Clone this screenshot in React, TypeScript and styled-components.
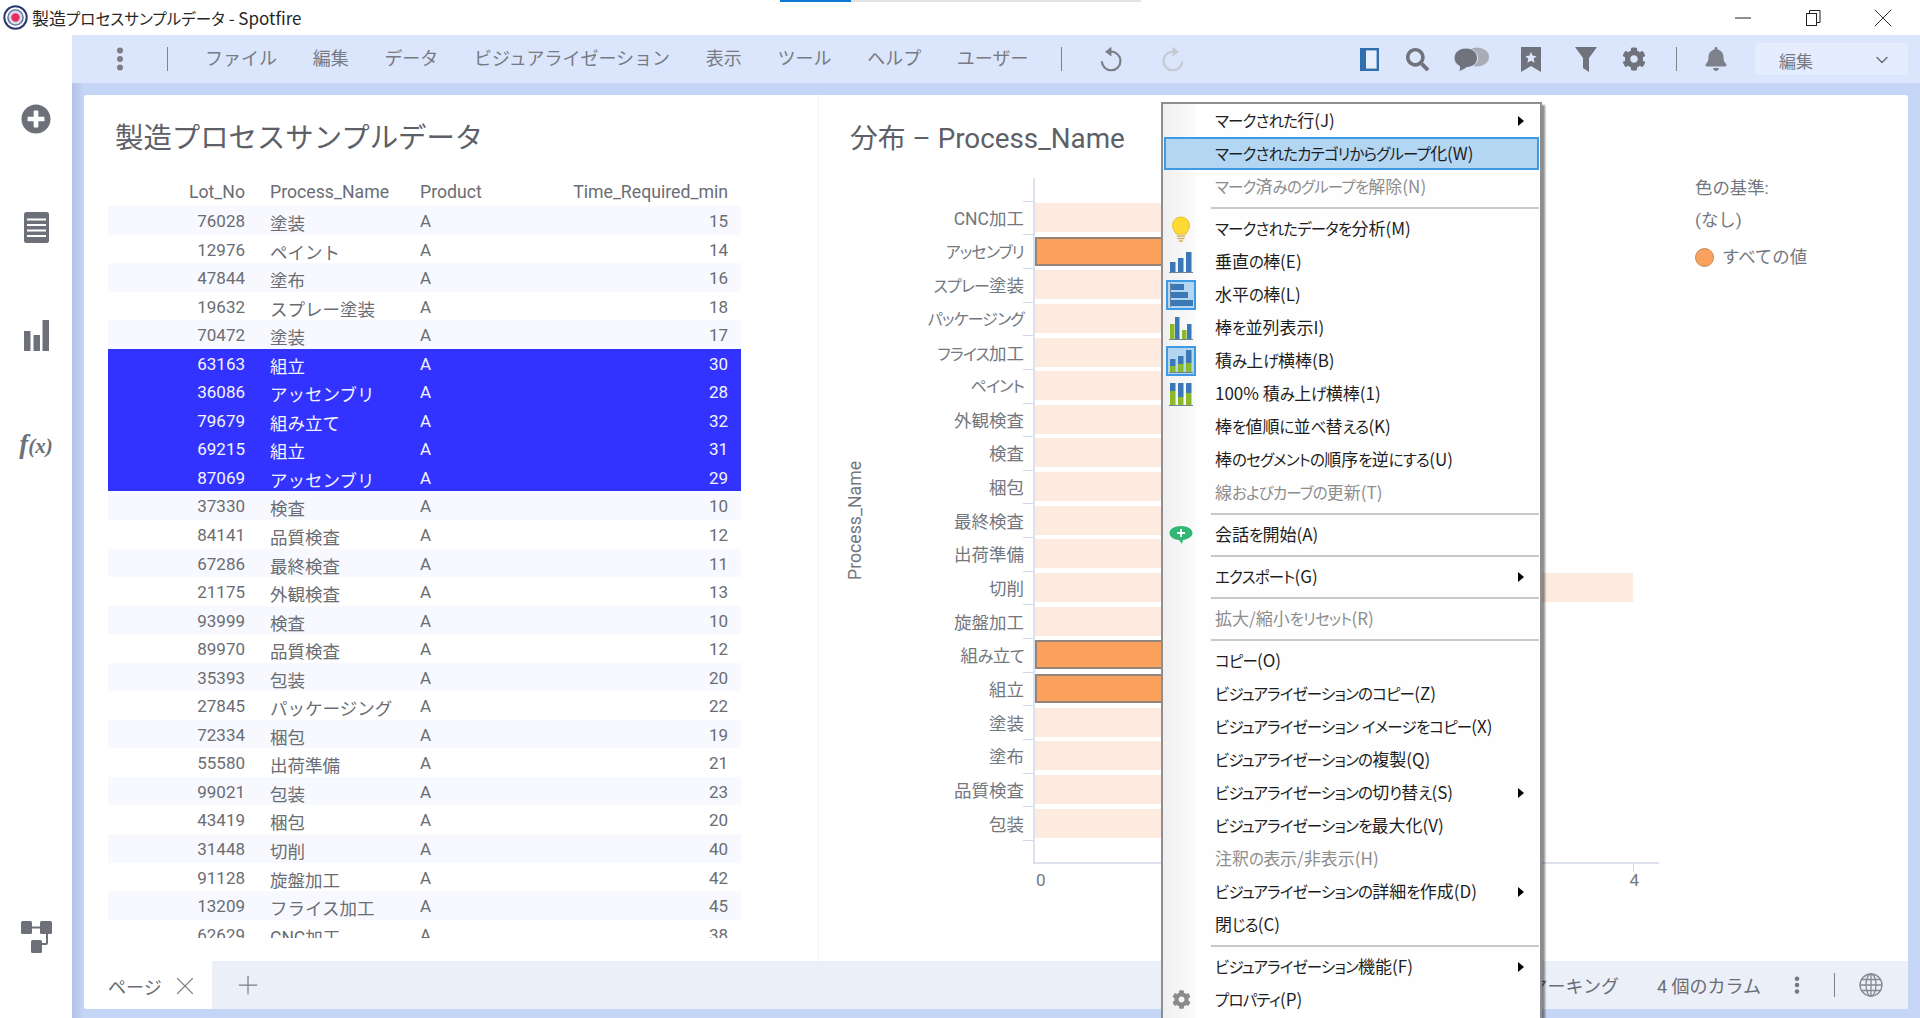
import React from "react";
import styled, { createGlobalStyle } from "styled-components";
import { FaCog, FaBell, FaSearch, FaPlusCircle } from "react-icons/fa";
import { ChevronDown, X, Plus } from "lucide-react";

const FONT = `Roboto, "Noto Sans CJK JP", sans-serif`;
const UI_FONT = `"Noto Sans CJK JP", "Noto Sans", sans-serif`;

const Global = createGlobalStyle`
  html, body { margin: 0; height: 100%; overflow: hidden; background: #fff; }
  #root { height: 100%; }
  * { box-sizing: border-box; }
`;

const Shell = styled.div`
  position: relative;
  width: 1920px;
  height: 1018px;
  overflow: hidden;
  display: flex;
  flex-direction: column;
  font-family: ${FONT};
  color: #6a6d74;
`;

/* narrower kana, as the Windows UI font of the menus has */
const Kana = styled.span`
  font-size: 0.91em;
  letter-spacing: -0.8px;
`;
const TitleKana = styled(Kana)`
  letter-spacing: 0.1px;
`;
const KANA_RUN = /([\u3040-\u30ff]+)/;
const withKana = (text: string, Run: typeof Kana = Kana) =>
  text.split(KANA_RUN).map((part, i) => (i % 2 ? <Run key={i}>{part}</Run> : part));

/* ---------- window title bar ---------- */
const TitleBar = styled.header`
  position: relative;
  height: 35px;
  flex: none;
  display: flex;
  align-items: center;
  padding-left: 3px;
  background: #fff;
`;
const LoadStrip = styled.div`
  position: absolute;
  left: 780px;
  top: 0;
  width: 361px;
  height: 2px;
  background: linear-gradient(to right, #0a78d4 0 71px, #e3e3e3 71px);
`;
const WindowTitle = styled.span`
  margin-left: 4px;
  font: 400 17px ${UI_FONT};
  font-feature-settings: "palt";
  color: #262626;
  white-space: nowrap;
`;
const WindowControls = styled.div`
  margin-left: auto;
  display: flex;
  align-items: center;
  padding-right: 2px;
`;
const WindowButton = styled.div`
  width: 70px;
  height: 35px;
  display: flex;
  align-items: center;
  justify-content: center;
  color: #222;
`;

const Body = styled.div`
  flex: 1;
  min-height: 0;
  display: flex;
`;

/* ---------- left rail ---------- */
const Rail = styled.nav`
  width: 72px;
  flex: none;
  display: flex;
  flex-direction: column;
  padding: 30px 0 27px;
  background: #fff;
  color: #6e7079;
`;
const RailSlot = styled.div`
  height: 108px;
  display: flex;
  align-items: center;
  justify-content: center;
`;
const RailFoot = styled(RailSlot)`
  margin-top: auto;
`;
const FxLabel = styled.span`
  font: italic 700 27px "Liberation Serif", serif;
  color: #6e7079;
  padding-top: 2px;
  small { font-size: 21px; }
`;

/* ---------- main column ---------- */
const Main = styled.main`
  flex: 1;
  min-width: 0;
  display: flex;
  flex-direction: column;
  background: linear-gradient(to right, #b3c3e6 0, #c5d5f6 12px);
`;
const Toolbar = styled.div`
  height: 48px;
  flex: none;
  display: flex;
  align-items: center;
  background: #dbe6fc;
  color: #7a7d85;
`;
const DotsSlot = styled.div`
  width: 95px;
  display: flex;
  justify-content: center;
`;
const VSep = styled.div<{ $ml?: number }>`
  width: 1px;
  height: 24px;
  background: #7f828a;
  margin-left: ${(p) => p.$ml ?? 0}px;
  flex: none;
`;
const MenuBar = styled.div`
  display: flex;
  gap: 35.7px;
  margin-left: 37px;
  padding-bottom: 4px;
  font: 400 18px ${UI_FONT};
  white-space: nowrap;
  color: #777a82;
`;
const IconSlot = styled.div<{ $w: number; $color?: string }>`
  width: ${(p) => p.$w}px;
  flex: none;
  display: flex;
  align-items: center;
  justify-content: center;
  color: ${(p) => p.$color ?? "#767983"};
`;
const ToolRight = styled.div`
  margin-left: auto;
  display: flex;
  align-items: center;
  padding-right: 12px;
`;
const ModeSelect = styled.div`
  width: 153px;
  height: 32px;
  display: flex;
  align-items: center;
  justify-content: space-between;
  padding: 2px 16px 0 24px;
  border-radius: 3px;
  background: #e4ecfd;
  font: 400 17px ${UI_FONT};
  color: #777a82;
`;

const Card = styled.section`
  flex: 1;
  min-height: 0;
  margin: 12px 12px 9px 12px;
  display: flex;
  flex-direction: column;
  background: #fff;
  border-radius: 3px;
  overflow: hidden;
`;
const Panels = styled.div`
  flex: 1;
  min-height: 0;
  display: flex;
`;

/* ---------- table panel ---------- */
const TablePanel = styled.div`
  width: 735px;
  flex: none;
  padding: 23px 0 0 24px;
  border-right: 1px solid #f0f2f9;
`;
const PanelTitle = styled.h2<{ $indent: number; $size: number }>`
  margin: 0 0 18px ${(p) => p.$indent}px;
  font: 400 ${(p) => p.$size}px/42px ${FONT};
  color: #5d6067;
  white-space: nowrap;
`;
const TableClip = styled.div`
  width: 633px;
  height: 760px;
  overflow: hidden;
`;
const Row = styled.div<{ $zebra?: boolean; $marked?: boolean; $head?: boolean }>`
  height: ${(p) => (p.$head ? 28 : 28.55)}px;
  display: grid;
  grid-template-columns: 137px 175px 1fr 200px;
  align-items: center;
  padding-right: 13px;
  font-size: ${(p) => (p.$head ? 17.7 : 17)}px;
  line-height: 28px;
  white-space: nowrap;
  background: ${(p) => (p.$marked ? "#3333ff" : p.$zebra ? "#f8f9fe" : "transparent")};
  color: ${(p) => (p.$marked ? "#f4f4ff" : "#6a6d74")};
`;
const NumCell = styled.span<{ $nudge?: boolean }>`
  text-align: right;
  padding-bottom: ${(p) => (p.$nudge ? 2 : 0)}px;
`;
const TextCell = styled.span<{ $first?: boolean; $nudge?: boolean }>`
  padding-left: ${(p) => (p.$first ? 25 : 0)}px;
  padding-bottom: ${(p) => (p.$nudge ? 2 : 0)}px;
`;
const CjkCell = styled(TextCell)`
  font-size: 17.5px;
  padding-top: 4px;
`;

/* ---------- chart panel ---------- */
const ChartPanel = styled.div`
  flex: 1;
  min-width: 0;
  padding: 23px 0 0 26px;
`;
const ChartBody = styled.div`
  display: flex;
  align-items: flex-start;
`;
const YTitle = styled.div`
  width: 19px;
  height: 684px;
  display: flex;
  align-items: center;
  justify-content: center;
  writing-mode: vertical-rl;
  transform: rotate(180deg);
  font-size: 17.7px;
  color: #74777e;
`;
const Plot = styled.div`
  width: 795px;
  flex: none;
`;
const AxisCap = styled.div<{ $h: number }>`
  height: ${(p) => p.$h}px;
  margin-left: 169px;
  border-left: 2px solid #dde0ee;
`;
const Band = styled.div`
  position: relative;
  height: 33.65px;
  display: flex;
  align-items: center;
  &::before {
    content: "";
    position: absolute;
    left: 159px;
    top: 0;
    width: 10px;
    height: 1px;
    background: #d5d8e8;
  }
`;
const EndTick = styled(Band)`
  height: 0;
`;
const BandLabel = styled.div`
  width: 169px;
  flex: none;
  padding-right: 9px;
  text-align: right;
  font-size: 17.5px;
  font-feature-settings: "palt";
  color: #74777e;
  white-space: nowrap;
`;
const BarTrack = styled.div`
  align-self: stretch;
  flex: 1;
  display: flex;
  align-items: center;
  border-left: 2px solid #dde0ee;
`;
const Bar = styled.div<{ $value: number; $marked?: boolean }>`
  width: ${(p) => p.$value * 149.5}px;
  height: 29px;
  background: ${(p) => (p.$marked ? "#fba15e" : "#fdebdf")};
  border: ${(p) => (p.$marked ? "2px solid #94857b" : "none")};
`;
const XAxis = styled.div`
  position: relative;
  margin-left: 169px;
  width: 626px;
  height: 30px;
  border-top: 2px solid #dde0ee;
  display: flex;
  justify-content: space-between;
  padding: 6px 20px 0 3px;
  font-size: 17px;
  line-height: 20px;
  color: #74777e;
  &::after {
    content: "";
    position: absolute;
    left: 600px;
    top: 0;
    width: 1px;
    height: 8px;
    background: #d5d8e8;
  }
`;
const Legend = styled.aside`
  margin-left: 36px;
  font-size: 17.4px;
  color: #74777e;
`;
const LegendLine = styled.div<{ $mb: number }>`
  line-height: 20px;
  margin-bottom: ${(p) => p.$mb}px;
  white-space: nowrap;
`;
const LegendItem = styled.div`
  display: flex;
  align-items: center;
  gap: 8px;
  line-height: 20px;
  margin-top: 1px;
`;
const LegendDot = styled.span`
  width: 19px;
  height: 19px;
  border-radius: 50%;
  background: #fba15e;
  border: 1px solid #c98a58;
`;

/* ---------- bottom tab bar ---------- */
const TabBar = styled.footer`
  height: 48px;
  flex: none;
  display: flex;
  align-items: center;
  background: #ebeff8;
  font-size: 18px;
  color: #6a6d74;
`;
const Tab = styled.div`
  width: 128px;
  height: 100%;
  display: flex;
  align-items: center;
  justify-content: space-between;
  padding: 1px 12px 0 24px;
  background: #fff;
  border-radius: 0 0 0 3px;
`;
const AddTab = styled.div`
  margin-left: 21px;
  display: flex;
  color: #7c7f86;
`;
const StatusRight = styled.div`
  margin-left: auto;
  display: flex;
  align-items: center;
  padding-right: 25px;
  white-space: nowrap;
`;
const StatusText = styled.span<{ $ml?: number }>`
  margin-left: ${(p) => p.$ml ?? 0}px;
`;
const StatusDots = styled.div`
  margin: 0 33px 0 32px;
  display: flex;
  color: #74777e;
`;
const StatusGlobe = styled.div`
  margin-left: 24px;
  display: flex;
  color: #85888f;
`;

/* ---------- context menu ---------- */
const ContextMenu = styled.div`
  position: absolute;
  left: 1161px;
  top: 102px;
  width: 381px;
  height: 930px;
  border: 2px solid #8e8e8e;
  background: linear-gradient(to right, #f0f0f0 0, #fafafa 30px, #fff 35px, #fefefe 36px);
  box-shadow: 3px 3px 2px rgba(0, 0, 0, 0.45);
  font: 400 17px ${UI_FONT};
  font-feature-settings: "palt";
  color: #1e1e1e;
`;
const MenuItem = styled.div<{ $active?: boolean; $disabled?: boolean }>`
  height: 33px;
  margin: 0 1px;
  display: flex;
  align-items: center;
  padding-right: 13px;
  border: 2px solid ${(p) => (p.$active ? "#3f9ae4" : "transparent")};
  background: ${(p) => (p.$active ? "#b3d6f3" : "transparent")};
  color: ${(p) => (p.$disabled ? "#8d8d8d" : "#1e1e1e")};
  white-space: nowrap;
`;
const MenuIcon = styled.span<{ $on?: boolean }>`
  width: 30px;
  height: 30px;
  flex: none;
  display: flex;
  align-items: center;
  justify-content: center;
  background: ${(p) => (p.$on ? "#b3d6f3" : "transparent")};
  outline: ${(p) => (p.$on ? "2px solid #3f9ae4" : "none")};
  outline-offset: -2px;
`;
const MenuLabel = styled.span`
  margin-left: 19px;
  padding-bottom: 2px;
`;
const SubArrow = styled.span`
  margin-left: auto;
  width: 0;
  height: 0;
  border-left: 6px solid #000;
  border-top: 5px solid transparent;
  border-bottom: 5px solid transparent;
`;
const MenuSep = styled.div`
  height: 2px;
  margin: 3.5px 1px 3.5px 48px;
  background: #c9c9c9;
`;

/* ---------- drawings ---------- */
const Logo = () => (
  <svg width="25" height="25" viewBox="0 0 25 25">
    <circle cx="12.5" cy="12.5" r="11.2" fill="#fff" stroke="#2b3a6b" strokeWidth="2" />
    <circle cx="12.5" cy="12.5" r="7.6" fill="#d6dcec" stroke="#5c6a96" strokeWidth="1.4" />
    <circle cx="12.5" cy="12.5" r="4.2" fill="#e5305f" />
  </svg>
);
const Dots = ({ size = 24 }: { size?: number }) => (
  <svg width="8" height={size} viewBox="0 0 8 24" fill="currentColor">
    <circle cx="4" cy="3.5" r="3" />
    <circle cx="4" cy="12" r="3" />
    <circle cx="4" cy="20.5" r="3" />
  </svg>
);
const TableIcon = () => (
  <svg width="25" height="31" viewBox="0 0 25 31">
    <rect width="25" height="31" rx="2.5" fill="#6e7079" />
    <path d="M3 7.5h19M3 13h19M3 18.5h19M3 24h19" stroke="#fff" strokeWidth="2.2" />
  </svg>
);
const BarsIcon = () => (
  <svg width="25" height="31" viewBox="0 0 25 31" fill="#6e7079">
    <rect x="0" y="11" width="6.5" height="20" />
    <rect x="9.5" y="15" width="6.5" height="16" />
    <rect x="18.5" y="0" width="6.5" height="31" />
  </svg>
);
const NetworkIcon = () => (
  <svg width="31" height="32" viewBox="0 0 31 32" fill="#6e7079">
    <rect x="0" y="0" width="11" height="13" rx="1.5" />
    <rect x="19" y="0" width="12" height="13" rx="1.5" />
    <rect x="10" y="19" width="11" height="13" rx="1.5" />
    <path d="M10 5.5h10v2H10zM25 12h2v10a2 2 0 0 1-2 2h-5v-2h5z" />
  </svg>
);
const PanelIcon = () => (
  <svg width="19" height="23" viewBox="0 0 19 23">
    <rect x="1.2" y="1.2" width="16.6" height="20.6" fill="#e7eefd" stroke="#2f6fb0" strokeWidth="2.4" />
    <rect x="1" y="1" width="5" height="21" fill="#2f6fb0" />
  </svg>
);
const UndoIcon = () => (
  <svg width="26" height="26" viewBox="0 0 24 24" fill="none">
    <path d="M11 5.2a8.600 8.600 0 1 1-8.400 8.800" stroke="currentColor" strokeWidth="2" />
    <path d="M5.500 5.200 11.500 .8v8.800z" fill="currentColor" />
  </svg>
);
const RedoIcon = () => (
  <svg width="26" height="26" viewBox="0 0 24 24" fill="none">
    <path d="M13 5.200a8.600 8.600 0 1 0 8.400 8.800" stroke="currentColor" strokeWidth="2" />
    <path d="M18.500 5.200 12.500 .8v8.800z" fill="currentColor" />
  </svg>
);
const CommentsIcon = () => (
  <svg width="36" height="25" viewBox="0 0 36 25">
    <ellipse cx="24" cy="10" rx="12" ry="9.5" fill="#a9acb5" />
    <path d="M13 1C6 1 1 5.500 1 11c0 3.500 2 6.500 5.500 8.200C7 21 6.500 23 5 24.500c3.500-.5 6.500-2 8.500-4 6 0 11-4 11-9.500S20 1 13 1z" fill="#70737c" stroke="#dbe6fc" strokeWidth="1" />
  </svg>
);
const BookmarkIcon = () => (
  <svg width="20" height="25" viewBox="0 0 20 25">
    <path d="M0 0h20v25l-10-6-10 6z" fill="#70737c" />
    <path d="M10 5l1.700 3.700 4 .4-3 2.700.9 4-3.600-2.100-3.600 2.100.9-4-3-2.700 4-.4z" fill="#dbe6fc" />
  </svg>
);
const FunnelIcon = () => (
  <svg width="22" height="25" viewBox="0 0 22 25" fill="#70737c">
    <path d="M0 0h22l-8 11v14l-6-4V11z" />
  </svg>
);
const Globe = () => (
  <svg width="24" height="24" viewBox="0 0 24 24" fill="none" stroke="currentColor" strokeWidth="1.3">
    <circle cx="12" cy="12" r="11" />
    <ellipse cx="12" cy="12" rx="5" ry="11" />
    <path d="M12 1v22M1 12h22M2.500 6.500h19M2.500 17.500h19" />
  </svg>
);
const RestoreIcon = () => (
  <svg width="15" height="16" viewBox="0 0 15 16" fill="none" stroke="#222" strokeWidth="1">
    <rect x="0.5" y="3.500" width="10" height="12" />
    <path d="M3.500 3.500V.5h10.500v12H10.500" />
  </svg>
);
const BLUE = "#3b78b5";
const GREEN = "#8cb82b";
const GREY = "#6f8296";
const Bulb = () => (
  <svg width="20" height="26" viewBox="0 0 20 26">
    <path d="M10 1a8.500 8.500 0 0 0-8.500 8.500c0 3.500 2.500 5.500 3.500 8.500h10c1-3 3.500-5 3.500-8.500A8.500 8.500 0 0 0 10 1z" fill="#ffd934" stroke="#e8bd2f" />
    <path d="M6 20h8M6.500 22.500h7M8 25h4" stroke="#d2b25c" strokeWidth="1.500" />
  </svg>
);
const VBars = () => (
  <svg width="24" height="22" viewBox="0 0 24 22">
    <rect x="1" y="11" width="5.500" height="10" fill={BLUE} />
    <rect x="9" y="7" width="5.500" height="14" fill={BLUE} />
    <rect x="17" y="1" width="5.500" height="20" fill={BLUE} />
    <path d="M0 21.500h24" stroke={GREY} />
  </svg>
);
const HBars = () => (
  <svg width="24" height="24" viewBox="0 0 24 24">
    <path d="M1.500 0v24" stroke={GREY} />
    <rect x="2" y="1" width="13" height="6" fill={BLUE} />
    <rect x="2" y="9" width="17" height="6" fill={BLUE} />
    <rect x="2" y="17" width="22" height="6" fill={BLUE} />
  </svg>
);
const SideBars = () => (
  <svg width="24" height="24" viewBox="0 0 24 24">
    <rect x="1" y="8" width="4.500" height="15" fill={GREEN} />
    <rect x="6" y="1" width="4.500" height="22" fill={BLUE} />
    <rect x="13" y="14" width="4.500" height="9" fill={GREEN} />
    <rect x="18" y="8" width="4.500" height="15" fill={BLUE} />
    <path d="M0 23.500h24" stroke={GREY} />
  </svg>
);
const StackBars = () => (
  <svg width="24" height="24" viewBox="0 0 24 24">
    <rect x="1" y="10" width="5.500" height="7" fill={BLUE} />
    <rect x="1" y="17" width="5.500" height="6" fill={GREEN} />
    <rect x="9" y="7" width="5.500" height="8" fill={BLUE} />
    <rect x="9" y="15" width="5.500" height="8" fill={GREEN} />
    <rect x="17" y="1" width="5.500" height="13" fill={BLUE} />
    <rect x="17" y="14" width="5.500" height="9" fill={GREEN} />
    <path d="M0 23.500h24" stroke={GREY} />
  </svg>
);
const FullBars = () => (
  <svg width="24" height="24" viewBox="0 0 24 24">
    <rect x="1" y="1" width="5.500" height="8" fill={BLUE} />
    <rect x="1" y="9" width="5.500" height="14" fill={GREEN} />
    <rect x="9" y="1" width="5.500" height="14" fill={BLUE} />
    <rect x="9" y="15" width="5.500" height="8" fill={GREEN} />
    <rect x="17" y="1" width="5.500" height="10" fill={BLUE} />
    <rect x="17" y="11" width="5.500" height="12" fill={GREEN} />
    <path d="M0 23.500h24" stroke={GREY} />
  </svg>
);
const ChatPlus = () => (
  <svg width="24" height="18" viewBox="0 0 24 18">
    <path d="M12 0C5.500 0 .5 3 .5 7s5 7 9.500 7l3 4 1-4.100C18.500 13.500 23.500 11 23.500 7S18.500 0 12 0z" fill="#2fb873" />
    <path d="M12 3v8M8 7h8" stroke="#fff" strokeWidth="1.800" />
  </svg>
);

/* ---------- data ---------- */
const ROWS: [string, string, string][] = [
  ["76028", "塗装", "15"], ["12976", "ペイント", "14"], ["47844", "塗布", "16"],
  ["19632", "スプレー塗装", "18"], ["70472", "塗装", "17"], ["63163", "組立", "30"],
  ["36086", "アッセンブリ", "28"], ["79679", "組み立て", "32"], ["69215", "組立", "31"],
  ["87069", "アッセンブリ", "29"], ["37330", "検査", "10"], ["84141", "品質検査", "12"],
  ["67286", "最終検査", "11"], ["21175", "外観検査", "13"], ["93999", "検査", "10"],
  ["89970", "品質検査", "12"], ["35393", "包装", "20"], ["27845", "パッケージング", "22"],
  ["72334", "梱包", "19"], ["55580", "出荷準備", "21"], ["99021", "包装", "23"],
  ["43419", "梱包", "20"], ["31448", "切削", "40"], ["91128", "旋盤加工", "42"],
  ["13209", "フライス加工", "45"], ["62629", "CNC加工", "38"],
];
const MARKED_ROWS = new Set(["63163", "36086", "79679", "69215", "87069"]);

const BANDS: { name: string; value: number; marked?: boolean }[] = [
  { name: "CNC加工", value: 1 }, { name: "アッセンブリ", value: 2, marked: true },
  { name: "スプレー塗装", value: 1 }, { name: "パッケージング", value: 1 },
  { name: "フライス加工", value: 1 }, { name: "ペイント", value: 1 },
  { name: "外観検査", value: 1 }, { name: "検査", value: 2 }, { name: "梱包", value: 2 },
  { name: "最終検査", value: 1 }, { name: "出荷準備", value: 1 }, { name: "切削", value: 4 },
  { name: "旋盤加工", value: 1 }, { name: "組み立て", value: 1, marked: true },
  { name: "組立", value: 2, marked: true }, { name: "塗装", value: 2 }, { name: "塗布", value: 1 },
  { name: "品質検査", value: 2 }, { name: "包装", value: 2 },
];

type Entry =
  | { sep: true }
  | {
      sep?: false;
      label: string;
      icon?: React.ReactNode;
      on?: boolean;
      active?: boolean;
      disabled?: boolean;
      sub?: boolean;
    };

const MENU: Entry[] = [
  { label: "マークされた行(J)", sub: true },
  { label: "マークされたカテゴリからグループ化(W)", active: true },
  { label: "マーク済みのグループを解除(N)", disabled: true },
  { sep: true },
  { label: "マークされたデータを分析(M)", icon: <Bulb /> },
  { label: "垂直の棒(E)", icon: <VBars /> },
  { label: "水平の棒(L)", icon: <HBars />, on: true },
  { label: "棒を並列表示I)", icon: <SideBars /> },
  { label: "積み上げ横棒(B)", icon: <StackBars />, on: true },
  { label: "100% 積み上げ横棒(1)", icon: <FullBars /> },
  { label: "棒を値順に並べ替える(K)" },
  { label: "棒のセグメントの順序を逆にする(U)" },
  { label: "線およびカーブの更新(T)", disabled: true },
  { sep: true },
  { label: "会話を開始(A)", icon: <ChatPlus /> },
  { sep: true },
  { label: "エクスポート(G)", sub: true },
  { sep: true },
  { label: "拡大/縮小をリセット(R)", disabled: true },
  { sep: true },
  { label: "コピー(O)" },
  { label: "ビジュアライゼーションのコピー(Z)" },
  { label: "ビジュアライゼーション イメージをコピー(X)" },
  { label: "ビジュアライゼーションの複製(Q)" },
  { label: "ビジュアライゼーションの切り替え(S)", sub: true },
  { label: "ビジュアライゼーションを最大化(V)" },
  { label: "注釈の表示/非表示(H)", disabled: true },
  { label: "ビジュアライゼーションの詳細を作成(D)", sub: true },
  { label: "閉じる(C)" },
  { sep: true },
  { label: "ビジュアライゼーション機能(F)", sub: true },
  { label: "プロパティ(P)", icon: <FaCog size={19} color="#8b8b8b" /> },
];

const TOP_MENU = ["ファイル", "編集", "データ", "ビジュアライゼーション", "表示", "ツール", "ヘルプ", "ユーザー"];

export default function App() {
  return (
    <Shell>
      <Global />
      <TitleBar>
        <LoadStrip />
        <Logo />
        <WindowTitle>{withKana("製造プロセスサンプルデータ", TitleKana)} - Spotfire</WindowTitle>
        <WindowControls>
          <WindowButton>
            <svg width="16" height="2" viewBox="0 0 16 2"><path d="M0 1h16" stroke="#222" /></svg>
          </WindowButton>
          <WindowButton><RestoreIcon /></WindowButton>
          <WindowButton><X size={32} strokeWidth={0.7} /></WindowButton>
        </WindowControls>
      </TitleBar>
      <Body>
        <Rail>
          <RailSlot><FaPlusCircle size={30} color="#6e7079" /></RailSlot>
          <RailSlot><TableIcon /></RailSlot>
          <RailSlot><BarsIcon /></RailSlot>
          <RailSlot><FxLabel>f<small>(x)</small></FxLabel></RailSlot>
          <RailFoot><NetworkIcon /></RailFoot>
        </Rail>
        <Main>
          <Toolbar>
            <DotsSlot><Dots /></DotsSlot>
            <VSep />
            <MenuBar>
              {TOP_MENU.map((m) => <span key={m}>{m}</span>)}
            </MenuBar>
            <VSep $ml={33} />
            <IconSlot $w={20} />
            <IconSlot $w={60} $color="#7c7f87"><UndoIcon /></IconSlot>
            <IconSlot $w={60} $color="#c4c8d2"><RedoIcon /></IconSlot>
            <ToolRight>
              <IconSlot $w={48}><PanelIcon /></IconSlot>
              <IconSlot $w={48} $color="#70737c"><FaSearch size={23} /></IconSlot>
              <IconSlot $w={60}><CommentsIcon /></IconSlot>
              <IconSlot $w={60}><BookmarkIcon /></IconSlot>
              <IconSlot $w={50}><FunnelIcon /></IconSlot>
              <IconSlot $w={46} $color="#70737c"><FaCog size={24} /></IconSlot>
              <VSep $ml={19} />
              <IconSlot $w={78} $color="#7d818c"><FaBell size={24} /></IconSlot>
              <ModeSelect>
                編集
                <ChevronDown size={20} strokeWidth={1.8} color="#6f727a" />
              </ModeSelect>
            </ToolRight>
          </Toolbar>
          <Card>
            <Panels>
              <TablePanel>
                <PanelTitle $indent={7} $size={28.4}>製造プロセスサンプルデータ</PanelTitle>
                <TableClip>
                  <Row $head>
                    <NumCell>Lot_No</NumCell>
                    <TextCell $first>Process_Name</TextCell>
                    <TextCell>Product</TextCell>
                    <NumCell>Time_Required_min</NumCell>
                  </Row>
                  {ROWS.map(([lot, name, min], i) => (
                    <Row key={lot} $zebra={i % 2 === 0} $marked={MARKED_ROWS.has(lot)}>
                      <NumCell $nudge>{lot}</NumCell>
                      <CjkCell $first>{name}</CjkCell>
                      <TextCell $nudge>A</TextCell>
                      <NumCell $nudge>{min}</NumCell>
                    </Row>
                  ))}
                </TableClip>
              </TablePanel>
              <ChartPanel>
                <PanelTitle $indent={5} $size={27.8}>分布 – Process_Name</PanelTitle>
                <ChartBody>
                  <YTitle>Process_Name</YTitle>
                  <Plot>
                    <AxisCap $h={22.7} />
                    {BANDS.map((b) => (
                      <Band key={b.name}>
                        <BandLabel>{withKana(b.name)}</BandLabel>
                        <BarTrack>
                          <Bar $value={b.value} $marked={b.marked} />
                        </BarTrack>
                      </Band>
                    ))}
                    <EndTick />
                    <AxisCap $h={22} />
                    <XAxis>
                      <span>0</span>
                      <span>4</span>
                    </XAxis>
                  </Plot>
                  <Legend>
                    <LegendLine $mb={12}>色の基準:</LegendLine>
                    <LegendLine $mb={17}>(なし)</LegendLine>
                    <LegendItem>
                      <LegendDot />
                      すべての値
                    </LegendItem>
                  </Legend>
                </ChartBody>
              </ChartPanel>
            </Panels>
            <TabBar>
              <Tab>
                ページ
                <X size={30} strokeWidth={0.9} color="#7c7f86" />
              </Tab>
              <AddTab><Plus size={30} strokeWidth={1} /></AddTab>
              <StatusRight>
                <StatusText>マーキング</StatusText>
                <StatusText $ml={38}>4 個のカラム</StatusText>
                <StatusDots><Dots size={18} /></StatusDots>
                <VSep />
                <StatusGlobe><Globe /></StatusGlobe>
              </StatusRight>
            </TabBar>
          </Card>
        </Main>
      </Body>
      <ContextMenu>
        {MENU.map((e, i) =>
          e.sep ? (
            <MenuSep key={i} />
          ) : (
            <MenuItem key={i} $active={e.active} $disabled={e.disabled}>
              <MenuIcon $on={e.on}>{e.icon}</MenuIcon>
              <MenuLabel>{withKana(e.label)}</MenuLabel>
              {e.sub && <SubArrow />}
            </MenuItem>
          )
        )}
      </ContextMenu>
    </Shell>
  );
}
